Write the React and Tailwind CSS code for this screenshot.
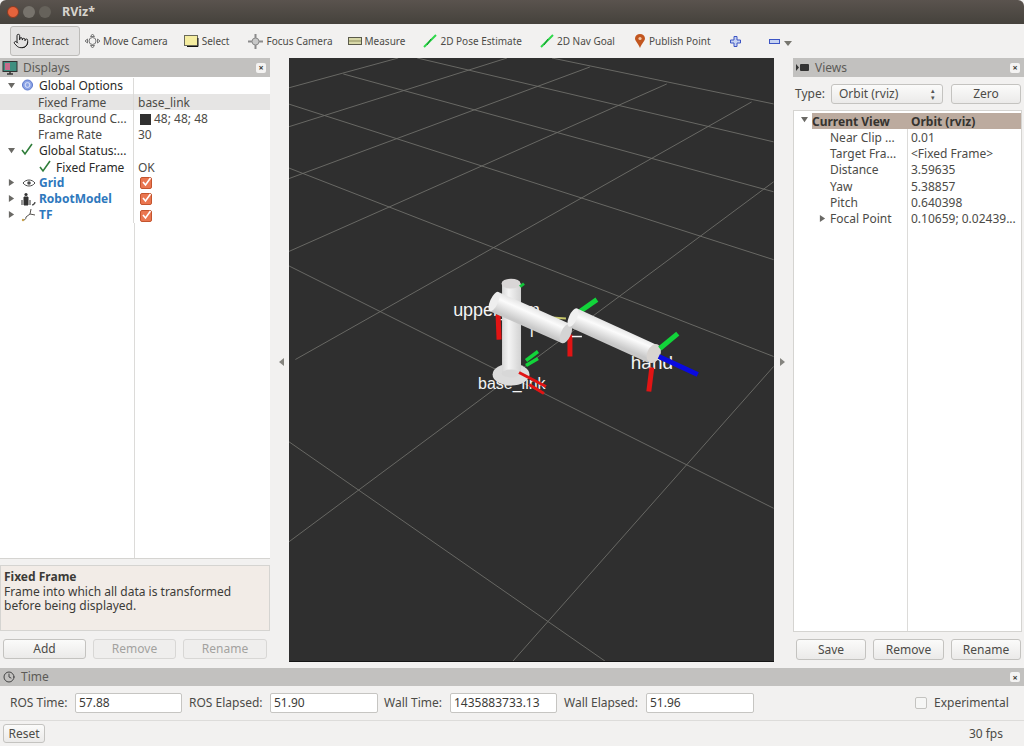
import React from 'react';
import { Pointer, Clock } from 'lucide-react';

const gridLines = [
  [552, 58, 774, 104], [417, 58, 774, 142], [343, 74, 774, 192], [288, 104, 774, 260],
  [288, 168, 774, 357], [288, 266, 774, 509], [288, 442, 605, 662],
  [288, 88, 398, 58], [288, 127, 507, 58], [288, 179, 590, 67], [288, 252, 667, 84],
  [295, 360, 752, 102], [774, 182, 288, 543], [774, 367, 513, 662],
];

const Viewport = () => (
  <svg viewBox="289 58 485 604" className="w-full h-full block">
    <defs>
      <linearGradient id="upright" x1="0" y1="0" x2="1" y2="0">
        <stop offset="0" stopColor="#d8d8d8" />
        <stop offset="0.35" stopColor="#f4f4f4" />
        <stop offset="1" stopColor="#d2d2d2" />
      </linearGradient>
      <linearGradient id="armA" gradientUnits="userSpaceOnUse" x1="535" y1="308" x2="527" y2="326">
        <stop offset="0" stopColor="#e4e4e4" />
        <stop offset="0.35" stopColor="#fbfbfb" />
        <stop offset="1" stopColor="#c8c8c8" />
      </linearGradient>
      <linearGradient id="armB" gradientUnits="userSpaceOnUse" x1="616" y1="326" x2="609" y2="343">
        <stop offset="0" stopColor="#e4e4e4" />
        <stop offset="0.35" stopColor="#fbfbfb" />
        <stop offset="1" stopColor="#c8c8c8" />
      </linearGradient>
    </defs>
    {gridLines.map((l, i) => (
      <line key={i} x1={l[0]} y1={l[1]} x2={l[2]} y2={l[3]} stroke="#6e6e6a" strokeWidth="0.9" />
    ))}
    <g fontFamily="'Liberation Sans', sans-serif" fill="#f4f4f4">
      <text x="453" y="316" fontSize="18">upper_arm</text>
      <text x="631" y="370" fontSize="19">hand</text>
      <text x="478" y="390" fontSize="16">base_link</text>
    </g>
    {/* base and upright */}
    <ellipse cx="511" cy="375" rx="18.5" ry="11" fill="#dcdcdc" />
    <rect x="502" y="284" width="19" height="90" fill="url(#upright)" />
    <ellipse cx="511" cy="374" rx="9.5" ry="4" fill="#d8d8d8" />
    <ellipse cx="511" cy="284" rx="9.5" ry="5" fill="#d9d6d6" />
    <line x1="520" y1="287" x2="524" y2="284" stroke="#12c43a" strokeWidth="3" />
    {/* axes behind arms */}
    <line x1="498" y1="315" x2="499" y2="340" stroke="#e11414" strokeWidth="5" />
    <line x1="570" y1="335" x2="570" y2="357" stroke="#e11414" strokeWidth="5" />
    <line x1="580" y1="312" x2="597" y2="300" stroke="#12d43a" strokeWidth="5" />
    <line x1="526" y1="361" x2="538" y2="352" stroke="#12d43a" strokeWidth="3.5" />
    <line x1="526" y1="366" x2="538" y2="359" stroke="#12d43a" strokeWidth="3.5" />
    <line x1="552" y1="318" x2="566" y2="319" stroke="#c8c86a" strokeWidth="2" />
    <text x="530" y="337" fontSize="16" fill="#f4f4f4" fontFamily="'Liberation Sans', sans-serif">l</text>
    <line x1="572" y1="337" x2="582" y2="337" stroke="#f4f4f4" strokeWidth="1.5" />
    {/* links */}
    <line x1="494" y1="302" x2="566" y2="334" stroke="url(#armA)" strokeWidth="21" />
    <ellipse cx="494" cy="302" rx="4" ry="10.5" transform="rotate(24 494 302)" fill="#eeeeee" />
    <ellipse cx="566" cy="334" rx="5" ry="10.5" transform="rotate(24 566 334)" fill="#d4d4d4" />
    <line x1="573" y1="318" x2="652" y2="354" stroke="url(#armB)" strokeWidth="20" />
    <ellipse cx="573" cy="318" rx="4" ry="10" transform="rotate(24 573 318)" fill="#f0f0f0" />
    <ellipse cx="654" cy="354" rx="6.500" ry="10" transform="rotate(24 654 354)" fill="#d8d4d0" />
    <line x1="660" y1="349" x2="678" y2="334" stroke="#12d43a" strokeWidth="5" />
    <line x1="659" y1="357" x2="698" y2="375" stroke="#0a0ae0" strokeWidth="5" />
    <line x1="652" y1="368" x2="649" y2="392" stroke="#e11414" strokeWidth="5" />
    <line x1="519" y1="373" x2="546" y2="387" stroke="#e11414" strokeWidth="3" />
    <line x1="529" y1="385" x2="544" y2="394" stroke="#e11414" strokeWidth="3" />
  </svg>
);

const CloseBox = () => (
  <span className="w-[10px] h-[10px] bg-[#f4f3f2] rounded-[2px] flex items-center justify-center text-[#3c3b37] text-[9px] leading-none font-bold">×</span>
);

const DockTitle = ({ icon, title }) => (
  <div className="h-[19px] bg-[#c2c1bf] flex items-center justify-between pl-[2px] pr-[4px]">
    <div className="flex items-center gap-[5px]">
      {icon}
      <span className="text-[12px] text-[#5c5b57]">{title}</span>
    </div>
    <CloseBox />
  </div>
);

const Btn = ({ children, disabled, className }) => (
  <div className={`flex items-center justify-center rounded-[3px] border text-[12px] ${disabled ? 'border-[#d8d7d5] text-[#a3a29f] bg-[#efeeed]' : 'border-[#c4c3c0] text-[#4c4b47] bg-gradient-to-b from-[#fbfbfa] to-[#ebeae9]'} ${className}`}>
    {children}
  </div>
);

const Arrow = ({ open }) => (
  <svg width="7" height="7" viewBox="0 0 8 8" className="shrink-0">
    {open ? <path d="M0 1h8L4 7z" fill="#6a6965" /> : <path d="M1 0v8l6-4z" fill="#6a6965" />}
  </svg>
);

const Check = ({ className }) => (
  <svg width="14" height="13" viewBox="0 0 14 13" className={className}>
    <path d="M2 7l3 4 7-10" fill="none" stroke="#2f7d3a" strokeWidth="1.6" />
  </svg>
);

const Orange = () => (
  <svg width="13" height="13" viewBox="0 0 13 13" className="ml-[2px]">
    <rect x="0.5" y="1.5" width="11" height="11" rx="1.5" fill="#ea7650" stroke="#c4552f" />
    <path d="M3 6l2.5 3L10.5 2" fill="none" stroke="#fff" strokeWidth="1.6" />
  </svg>
);

const GlobeIcon = () => (
  <svg width="13" height="13" viewBox="0 0 13 13">
    <circle cx="6.5" cy="6" r="5" fill="#8ca4e6" stroke="#5c78cc" />
    <circle cx="6.5" cy="6" r="2.4" fill="none" stroke="#dfe6fa" />
  </svg>
);

const EyeIcon = () => (
  <svg width="14" height="10" viewBox="0 0 14 10">
    <path d="M1 5c3-4 9-4 12 0-3 4-9 4-12 0z" fill="none" stroke="#4a4a4a" />
    <circle cx="7" cy="5" r="1.8" fill="#4a4a4a" />
  </svg>
);

const RobotIcon = () => (
  <svg width="15" height="14" viewBox="0 0 15 14">
    <circle cx="5" cy="2.5" r="1.6" fill="#333" />
    <path d="M3 5h4v8H3zM1 13V8M9 13V8M11 13c2 0 3-1 3-3" fill="#333" stroke="#333" />
  </svg>
);

const TfIcon = () => (
  <svg width="15" height="14" viewBox="0 0 15 14">
    <path d="M2 12c2 0 3-1 3-3M5 9l4-3M9 6l1-5M9 6l5 1" fill="none" stroke="#55524e" />
    <circle cx="2" cy="12" r="1.2" fill="#c9a24c" />
  </svg>
);

const Row = ({ left, right, indent = 38, arrow, icon, bold, blue, selected }) => (
  <div className={`h-[16.125px] grid grid-cols-[134px_1fr] items-center ${selected ? 'bg-[#e6e5e4]' : ''}`}>
    <div className="relative h-full flex items-center border-r border-[#dcdbd9] whitespace-nowrap overflow-hidden" style={{ paddingLeft: indent }}>
      {arrow && <span className="absolute left-[8px] top-[4px]"><Arrow open={arrow === 'open'} /></span>}
      {icon}
      <span className={blue ? 'font-bold text-[#2e78bd]' : bold ? 'text-[#2a2a28]' : ''}>{left}</span>
    </div>
    <div className="pl-[4px] flex items-center">{right}</div>
  </div>
);

const ViewRow = ({ left, right, arrow }) => (
  <div className="h-[16.125px] grid grid-cols-[114px_1fr] items-center">
    <div className="relative h-full flex items-center pl-[36px] border-r border-[#dcdbd9] whitespace-nowrap">
      {arrow && <span className="absolute left-[25px] top-[5px]"><Arrow /></span>}
      {left}
    </div>
    <div className="pl-[3px] whitespace-nowrap overflow-hidden">{right}</div>
  </div>
);

const Tool = ({ icon, label, className }) => (
  <div className={`flex items-center gap-[3px] whitespace-nowrap ${className}`}>
    {icon}
    <span>{label}</span>
  </div>
);

const Splitter = ({ right }) => (
  <div className="w-[19px] flex items-center justify-center">
    <svg width="6" height="8" viewBox="0 0 6 8" className={right ? 'mr-[3px] mt-[4px]' : 'ml-[5px] mt-[4px]'}>
      <path d={right ? 'M1 0v8l5-4z' : 'M5 0v8L0 4z'} fill="#85847f" />
    </svg>
  </div>
);

const TimeField = ({ label, value, labelClass, inputClass }) => (
  <>
    <span className={labelClass}>{label}</span>
    <div className={`h-[20px] bg-white border border-[#c6c5c2] rounded-[2px] pl-[3px] flex items-center text-[12px] text-[#3c3b37] ${inputClass}`}>{value}</div>
  </>
);

export default function App() {
  return (
    <div className="w-[1024px] h-[746px] flex flex-col overflow-hidden bg-[#f2f1f0] text-[12px] text-[#4c4b47] font-['Noto_Sans',sans-serif]">
      {/* title bar */}
      <div className="h-[24px] shrink-0 rounded-t-[6px] bg-gradient-to-b from-[#5a534e] to-[#45423c] flex items-center pl-[7px]">
        <span className="w-[12px] h-[12px] rounded-full bg-[#e4633c] border border-[#8a3a22]" />
        <span className="w-[12px] h-[12px] rounded-full bg-[#77736c] ml-[4px]" />
        <span className="w-[12px] h-[12px] rounded-full bg-[#66625b] ml-[4px]" />
        <span className="ml-[11px] text-[12.5px] font-bold text-[#d7d4cd]">RViz*</span>
      </div>

      {/* tool bar */}
      <div className="h-[34px] shrink-0 flex items-center text-[10px] text-[#4c4b47]">
        <Tool
          className="ml-[10px] w-[70px] h-[30px] pl-[2px] gap-[2px] rounded-[3px] border border-[#bdbcb9] bg-[#e4e3e2]"
          icon={<Pointer size={16} strokeWidth={1.5} className="text-[#222]" />}
          label="Interact"
        />
        <Tool
          className="ml-[5px] gap-[2px]"
          icon={
            <svg width="15" height="14" viewBox="0 0 15 14">
              <circle cx="7.5" cy="7" r="3.5" fill="none" stroke="#777" />
              <path d="M7.5 0l2 2.5h-4zM7.5 14l2-2.5h-4zM0 7l2.5-2v4zM15 7l-2.5-2v4z" fill="none" stroke="#777" />
            </svg>
          }
          label="Move Camera"
        />
        <Tool
          className="ml-[16px] gap-[2px]"
          icon={
            <svg width="15" height="12" viewBox="0 0 15 12">
              <rect x="0.5" y="0.5" width="13" height="10" fill="#f5eda0" stroke="#6a6a5a" />
              <path d="M14 3v8.500H3" stroke="#111" fill="none" />
            </svg>
          }
          label="Select"
        />
        <Tool
          className="ml-[19px]"
          icon={
            <svg width="15" height="15" viewBox="0 0 15 15">
              <path d="M7.500 0v15M0 7.500h15" stroke="#8a8a8a" strokeWidth="2" />
              <circle cx="7.500" cy="7.500" r="3.500" fill="#c8c8c8" stroke="#8a8a8a" />
            </svg>
          }
          label="Focus Camera"
        />
        <Tool
          className="ml-[15px]"
          icon={
            <svg width="14" height="8" viewBox="0 0 14 8">
              <rect x="0.5" y="0.5" width="13" height="7" fill="#d8d8a8" stroke="#5a5a4a" />
              <path d="M1 4h12" stroke="#8c8c5c" />
            </svg>
          }
          label="Measure"
        />
        <Tool
          className="ml-[18px]"
          icon={
            <svg width="14" height="14" viewBox="0 0 14 14">
              <path d="M1 13L13 1" stroke="#2ed84a" strokeWidth="2" />
              <path d="M4 11l4-6" stroke="#148a2c" />
            </svg>
          }
          label="2D Pose Estimate"
        />
        <Tool
          className="ml-[18px]"
          icon={
            <svg width="14" height="14" viewBox="0 0 14 14">
              <path d="M1 13L13 1" stroke="#2ed84a" strokeWidth="2" />
              <path d="M4 11l4-6" stroke="#148a2c" />
            </svg>
          }
          label="2D Nav Goal"
        />
        <Tool
          className="ml-[20px] gap-[4px]"
          icon={
            <svg width="10" height="14" viewBox="0 0 10 14">
              <path d="M5 14C3 9 0 7 0 4.500a5 4.500 0 0 1 10 0C10 7 7 9 5 14z" fill="#c2561f" />
              <circle cx="5" cy="4.500" r="1.600" fill="#f3c9a8" />
            </svg>
          }
          label="Publish Point"
        />
        <svg width="11" height="11" viewBox="0 0 11 11" className="ml-[19px]">
          <path d="M4 .5h3v3.500h3.500v3H7v3.500H4V7H.5V4H4z" fill="#c7d3f2" stroke="#3d55c4" />
        </svg>
        <svg width="11" height="5" viewBox="0 0 11 5" className="ml-[28px]">
          <rect x="0.500" y="0.500" width="10" height="4" fill="#c7d3f2" stroke="#3d55c4" />
        </svg>
        <svg width="8" height="5" viewBox="0 0 8 5" className="ml-[4px] mt-[4px]"><path d="M0 0h8L4 5z" fill="#77766f" /></svg>
      </div>

      {/* main area */}
      <div className="h-[604px] shrink-0 flex">
        <div className="w-[270px] flex flex-col">
          <DockTitle
            title="Displays"
            icon={
              <svg width="16" height="14" viewBox="0 0 16 14">
                <rect x="1" y="0.500" width="14" height="10" fill="#3f8f80" stroke="#333" />
                <rect x="3" y="2" width="5" height="7" fill="#c76a8a" />
                <path d="M5 13h6M8 10.500V13" stroke="#333" strokeWidth="1.500" />
              </svg>
            }
          />
          <div className="h-[482px] bg-white border-b border-[#d5d4d1] pt-px text-[#4c4b47] overflow-hidden relative">
            <Row left="Global Options" indent={21} arrow="open" bold icon={<span className="mr-[5px] -mt-[2px]"><GlobeIcon /></span>} />
            <Row left="Fixed Frame" right="base_link" selected />
            <Row left="Background C..." right={<><span className="w-[11px] h-[11px] ml-[2px] bg-[#303030] mr-[3px]" /><span>48; 48; 48</span></>} />
            <Row left="Frame Rate" right="30" />
            <Row left="Global Status:..." indent={20} arrow="open" bold icon={<Check className="mr-[5px] -mt-[2px]" />} />
            <Row left="Fixed Frame" right="OK" indent={38} bold icon={<Check className="mr-[4px] -mt-[2px]" />} />
            <Row left="Grid" indent={22} arrow="closed" blue icon={<span className="mr-[3px] flex"><EyeIcon /></span>} right={<Orange />} />
            <Row left="RobotModel" indent={21} arrow="closed" blue icon={<span className="mr-[3px] flex"><RobotIcon /></span>} right={<Orange />} />
            <Row left="TF" indent={21} arrow="closed" blue icon={<span className="mr-[3px] flex"><TfIcon /></span>} right={<Orange />} />
            <div className="absolute left-[134px] top-[146px] bottom-0 w-px bg-[#dcdbd9]" />
          </div>
          <div className="mt-[6px] h-[66px] bg-[#f2ece7] border border-[#d5d4d1] pl-[3px] pt-[4px] leading-[14.500px] text-[#3c3b37]">
            <div className="font-bold">Fixed Frame</div>
            <div>Frame into which all data is transformed</div>
            <div>before being displayed.</div>
          </div>
          <div className="mt-[8px] pl-[3px] flex gap-[7px]">
            <Btn className="w-[83px] h-[20px]">Add</Btn>
            <Btn disabled className="w-[83px] h-[20px]">Remove</Btn>
            <Btn disabled className="w-[84px] h-[20px]">Rename</Btn>
          </div>
        </div>

        <Splitter />
        <div className="w-[485px] bg-[#2f2f2f] border-b border-[#141414]"><Viewport /></div>
        <Splitter right />

        <div className="w-[231px] flex flex-col">
          <DockTitle
            title="Views"
            icon={
              <svg width="14" height="9" viewBox="0 0 14 9" className="ml-[1px]">
                <path d="M0 1l3 3.500L0 8z" fill="#333" />
                <rect x="4" y="1" width="9" height="7" rx="1" fill="#333" />
              </svg>
            }
          />
          <div className="h-[21px] mt-[6px] flex items-center pl-[2px]">
            <span className="w-[36px]">Type:</span>
            <div className="w-[112px] h-[20px] rounded-[3px] border border-[#c4c3c0] bg-gradient-to-b from-[#fbfbfa] to-[#ebeae9] flex items-center justify-between px-[7px]">
              <span>Orbit (rviz)</span>
              <span className="text-[7px] leading-[7px] text-[#555]">▴<br />▾</span>
            </div>
            <Btn className="w-[70px] h-[20px] ml-[8px]">Zero</Btn>
          </div>
          <div className="h-[522px] mt-[6px] mr-[2px] bg-white border border-[#d5d4d1] relative overflow-hidden">
            <div className="h-[16.125px] mt-[2px] ml-[18px] grid grid-cols-[96px_1fr] items-center bg-[#bcab9f] font-bold text-[#35332f]">
              <span>Current View</span>
              <span className="pl-[3px]">Orbit (rviz)</span>
            </div>
            <span className="absolute left-[7px] top-[5px]"><Arrow open /></span>
            <ViewRow left="Near Clip ..." right="0.01" />
            <ViewRow left="Target Fra..." right="<Fixed Frame>" />
            <ViewRow left="Distance" right="3.59635" />
            <ViewRow left="Yaw" right="5.38857" />
            <ViewRow left="Pitch" right="0.640398" />
            <ViewRow left="Focal Point" right="0.10659; 0.02439..." arrow />
            <div className="absolute left-[113px] top-[115px] bottom-0 w-px bg-[#dcdbd9]" />
          </div>
          <div className="mt-[7px] pl-[3px] flex gap-[7px]">
            <Btn className="w-[70px] h-[21px]">Save</Btn>
            <Btn className="w-[71px] h-[21px]">Remove</Btn>
            <Btn className="w-[70px] h-[21px]">Rename</Btn>
          </div>
        </div>
      </div>

      {/* time panel */}
      <div className="mt-[6px] h-[18px] shrink-0 bg-[#c2c1bf] flex items-center justify-between pl-[3px] pr-[4px]">
        <div className="flex items-center gap-[6px]">
          <Clock size={12} strokeWidth={2} className="text-[#444]" />
          <span className="text-[#5c5b57]">Time</span>
        </div>
        <CloseBox />
      </div>
      <div className="h-[35px] shrink-0 flex items-center border-b border-[#dddcda] whitespace-nowrap">
        <TimeField label="ROS Time:" value="57.88" labelClass="ml-[10px] w-[65px]" inputClass="w-[107px]" />
        <TimeField label="ROS Elapsed:" value="51.90" labelClass="ml-[7px] w-[81px]" inputClass="w-[108px]" />
        <TimeField label="Wall Time:" value="1435883733.13" labelClass="ml-[6px] w-[66px]" inputClass="w-[107px]" />
        <TimeField label="Wall Elapsed:" value="51.96" labelClass="ml-[7px] w-[82px]" inputClass="w-[108px]" />
        <span className="ml-[161px] w-[12px] h-[12px] border border-[#c4c3c0] rounded-[2px] bg-[#f6f6f5]" />
        <span className="ml-[7px]">Experimental</span>
      </div>
      <div className="flex-1 flex items-center justify-between pl-[3px] pr-[21px]">
        <Btn className="w-[42px] h-[19px]">Reset</Btn>
        <span>30 fps</span>
      </div>
    </div>
  );
}
